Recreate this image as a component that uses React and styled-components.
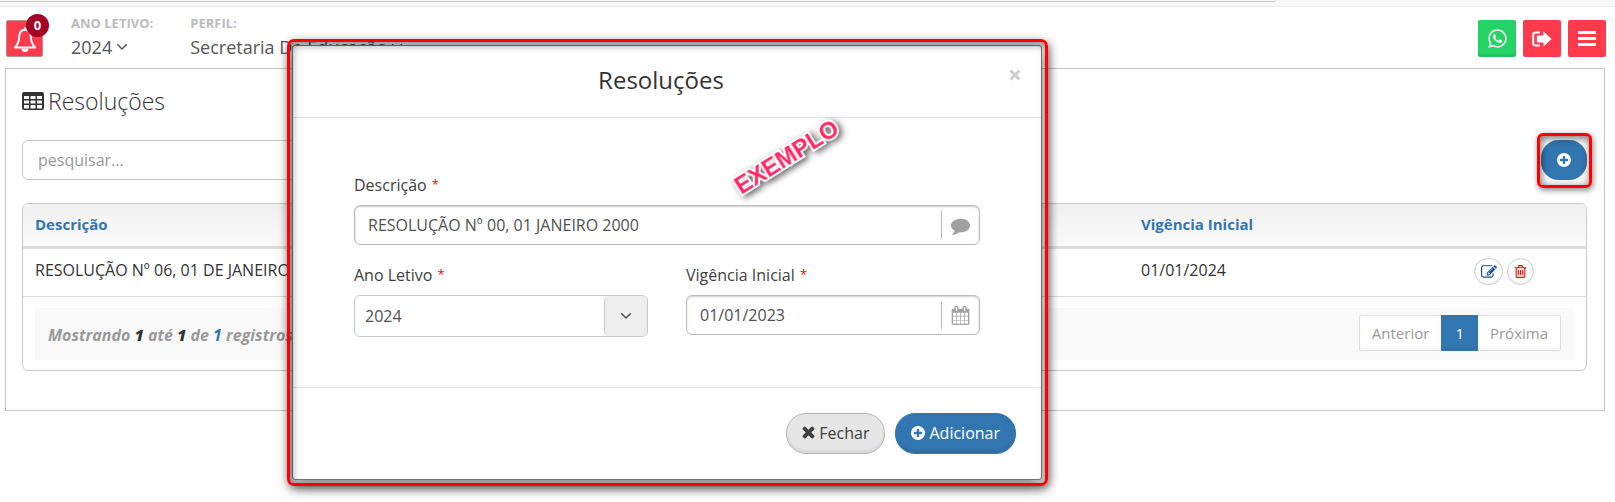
import styled, { createGlobalStyle, css } from "styled-components";
import { FaWhatsapp } from "react-icons/fa";

const GlobalStyle = createGlobalStyle`
	*, *::before, *::after {
		box-sizing: border-box;
	}
	body {
		margin: 0;
		background: #fff;
		color: #333;
		font-family: "Open Sans", "Noto Sans", sans-serif;
		font-size: 16px;
		line-height: 24px;
	}
	button, input, select {
		font: inherit;
		color: inherit;
		margin: 0;
	}
	button {
		cursor: pointer;
	}
`;

const Page = styled.div`
	position: relative;
	display: flex;
	flex-direction: column;
	min-height: 100vh;
`;

const BrowserStrip = styled.div`
	height: 7px;
	background: #f7f7f7;
	border-bottom: 1px solid #ececec;

	&::before {
		content: "";
		display: block;
		width: 79%;
		height: 2px;
		border-bottom: 1px solid #c8c8c8;
		border-bottom-right-radius: 8px;
	}
`;

const Header = styled.header`
	display: flex;
	justify-content: space-between;
	align-items: flex-start;
	height: 61px;
	padding: 13px 9px 0 6px;
`;

const HeaderLeft = styled.div`
	display: flex;
`;

const Bell = styled.button`
	position: relative;
	width: 37px;
	height: 37px;
	margin-right: 28px;
	padding: 0;
	border: 1px solid #b98f92;
	border-radius: 2px;
	background: #fd3b4d;
	color: #fff;
	display: flex;
	align-items: center;
	justify-content: center;

	svg {
		margin-top: 3px;
	}
`;

const Badge = styled.span`
	position: absolute;
	top: -7px;
	right: -7px;
	width: 23px;
	height: 23px;
	border-radius: 50%;
	background: #a50026;
	font-size: 13px;
	font-weight: 700;
	line-height: 23px;
	text-align: center;
`;

const Context = styled.div`
	margin-right: 37px;

	strong {
		display: block;
		height: 20px;
		margin-top: -7px;
		color: #bbb;
		font-size: 13px;
		line-height: 20px;
	}

	button {
		display: flex;
		align-items: center;
		gap: 4px;
		padding: 0;
		border: 0;
		background: none;
		color: #555;
		font-size: 18px;
		line-height: 28px;
	}
`;

const HeaderActions = styled.nav`
	display: flex;
	gap: 7px;
`;

const SquareButton = styled.button`
	display: flex;
	align-items: center;
	justify-content: center;
	width: 38px;
	height: 37px;
	padding: 0;
	border: 0;
	border-radius: 2px;
	background: ${({ $color }) => $color};
	color: #fff;
	box-shadow: ${({ $shade }) => ($shade ? "inset 0 -3px 2px rgba(0, 0, 0, 0.08)" : "none")};
`;

const Panel = styled.main`
	margin: 0 10px 0 5px;
	padding: 16px 17px 39px 16px;
	border: 1px solid #c8c8c8;
`;

const Title = styled.h1`
	display: flex;
	align-items: center;
	gap: 4px;
	margin: 0 0 23px;
	font-size: 23px;
	font-weight: 300;
	line-height: 32px;
`;

const Toolbar = styled.div`
	display: flex;
	justify-content: space-between;
	margin-bottom: 23px;
`;

const Search = styled.input`
	width: 40%;
	height: 40px;
	padding: 0 15px;
	border: 1px solid #c8c8c8;
	border-radius: 6px;

	&::placeholder {
		color: #999;
		opacity: 1;
	}
`;

const redFrame = css`
	content: "";
	position: absolute;
	border: 3px solid #f00;
	pointer-events: none;
`;

const AddButton = styled.button`
	position: relative;
	width: 46px;
	height: 40px;
	padding: 0;
	border: 0;
	border-radius: 18px;
	background: #3276b1;
	color: #fff;
	display: flex;
	align-items: center;
	justify-content: center;

	&::after {
		${redFrame}
		inset: -7px -5px -8px -4px;
		border-radius: 6px;
		box-shadow: 1px 2px 6px rgba(0, 0, 0, 0.5), inset 1px 2px 8px rgba(0, 0, 0, 0.6);
	}
`;

const TableBox = styled.section`
	overflow: hidden;
	border: 1px solid #c8c8c8;
	border-radius: 6px;
`;

const Table = styled.table`
	width: 100%;
	table-layout: fixed;
	border-collapse: separate;
	border-spacing: 0;

	th {
		height: 45px;
		padding: 0 12px 2px;
		border-bottom: 3px solid #ddd;
		background: linear-gradient(#f1f1f1, #fafafa);
		color: #3276b1;
		font-size: 15px;
		text-align: left;
	}
	th:nth-child(2) {
		width: 293px;
	}
	th:last-child {
		width: 164px;
	}
	td {
		height: 48px;
		padding: 9px 12px 0;
		border-bottom: 1px solid #d9d9d9;
		vertical-align: top;
	}
`;

const RowActions = styled.div`
	display: flex;
	justify-content: center;
	gap: 4px;
`;

const RoundButton = styled.button`
	display: flex;
	align-items: center;
	justify-content: center;
	width: ${({ $width }) => $width}px;
	height: 27px;
	padding: 0;
	border: 1px solid #ccc;
	border-radius: 14px;
	background: #fff;
	color: ${({ $color }) => $color};
	box-shadow: inset 0 -2px 2px rgba(0, 0, 0, 0.06);
`;

const TableFooter = styled.footer`
	display: flex;
	align-items: flex-start;
	justify-content: space-between;
	height: 52px;
	margin: 11px 12px 10px;
	padding: 7px 13px 0;
	background: #f9f9f9;
`;

const Summary = styled.p`
	margin: 8px 0 0;
	color: #999;
	font-style: italic;
	font-weight: 700;

	b {
		color: #333;
	}
	i {
		color: #3276b1;
	}
`;

const Pagination = styled.nav`
	display: flex;
	height: 36px;
`;

const PageLink = styled.a`
	padding: 0 12px;
	border: 1px solid #ddd;
	background: #fff;
	color: #999;
	font-size: 15px;
	line-height: 35px;
	text-decoration: none;
	box-shadow: inset 0 -2px 2px rgba(0, 0, 0, 0.05);

	&:first-child {
		border-right: 0;
		border-radius: 2px 0 0 2px;
	}
	&:last-child {
		border-left: 0;
		border-radius: 0 2px 2px 0;
	}
	${({ $active }) =>
		$active &&
		css`
			padding: 0 13px;
			border-color: #3276b1;
			background: #3276b1;
			color: #fff;
		`}
`;

const Overlay = styled.div`
	position: absolute;
	top: 45px;
	left: 292px;
	width: 100%;
	max-width: 750px;

	&::after {
		${redFrame}
		inset: -6px -6px -6px -5px;
		border-radius: 7px;
		box-shadow: 2px 3px 9px rgba(0, 0, 0, 0.5), inset 2px 3px 8px rgba(0, 0, 0, 0.45);
	}
`;

const Modal = styled.section`
	border: 1px solid #777;
	border-radius: 3px;
	background: #fff;
	box-shadow: 0 5px 15px rgba(0, 0, 0, 0.5);
`;

const ModalHeader = styled.header`
	display: flex;
	align-items: flex-start;
	height: 72px;
	padding: 17px 20px 0;
	border-bottom: 1px solid #e2e2e2;

	h2 {
		flex: 1;
		margin: 0;
		font-size: 24px;
		font-weight: 400;
		line-height: 34px;
		text-align: center;
	}
	button {
		display: flex;
		margin-top: 6px;
		padding: 0;
		border: 0;
		background: none;
		color: #ccc;
	}
`;

const ModalBody = styled.form`
	display: grid;
	grid-template-columns: 1fr 1fr;
	gap: 18px 38px;
	padding: 55px 61px 50px;
	border-bottom: 1px solid #e2e2e2;
`;

const Field = styled.div`
	grid-column: ${({ $wide }) => ($wide ? "1 / -1" : "auto")};

	label {
		display: block;
		margin-bottom: 8px;
		color: #404040;
	}
	sup {
		margin-left: 1px;
		color: #f00;
		font-size: 13px;
		line-height: 0;
		vertical-align: 2px;
	}
`;

const InputBox = styled.div`
	display: flex;
	align-items: center;
	height: 40px;
	border: 1px solid #bbb;
	border-radius: 6px;
	color: #a0a0a0;
	box-shadow: inset 0 1px 2px rgba(0, 0, 0, 0.2);

	input {
		flex: 1;
		min-width: 0;
		height: 28px;
		padding: 0 13px;
		border: 0;
		border-right: 1px solid #bbb;
		outline: 0;
		background: none;
		color: #505050;
	}
	svg {
		flex: none;
		margin: 0 9px;
	}
`;

const SelectBox = styled.div`
	display: grid;
	grid-template-columns: 1fr 43px;
	height: 42px;
	border: 1px solid #c8c8c8;
	border-radius: 6px;
	overflow: hidden;
	color: #505050;

	select {
		grid-area: 1 / 1 / 2 / 3;
		padding: 0 10px;
		border: 0;
		background: none;
		appearance: none;
	}
	span {
		grid-area: 1 / 2;
		display: flex;
		align-items: center;
		justify-content: center;
		border-left: 1px solid #c8c8c8;
		border-radius: 6px;
		background: #eee;
		pointer-events: none;
	}
`;

const ModalFooter = styled.footer`
	display: flex;
	justify-content: flex-end;
	gap: 10px;
	padding: 25px;
`;

const PillButton = styled.button`
	display: flex;
	align-items: center;
	gap: 4px;
	height: 41px;
	padding: 0 15px 2px;
	border: 1px solid ${({ $primary }) => ($primary ? "#3276b1" : "#b5b5b5")};
	border-radius: 20px;
	background: ${({ $primary }) => ($primary ? "#3276b1" : "#e6e6e6")};
	color: ${({ $primary }) => ($primary ? "#fff" : "#404040")};
	box-shadow: inset 0 -3px 2px rgba(0, 0, 0, 0.06);
`;

const Stamp = styled.span`
	position: absolute;
	top: 98px;
	left: 436px;
	z-index: 1;
	color: #ff2765;
	font-family: "Liberation Sans", Arial, sans-serif;
	font-size: 24px;
	font-weight: 700;
	line-height: 28px;
	transform: rotate(-32deg);
	paint-order: stroke fill;
	-webkit-text-stroke: 4px #fff;
	filter: drop-shadow(2px 3px 3px rgba(0, 0, 0, 0.6));
`;

const Glyph = ({ d, size = 16, viewBox = "0 0 1792 1792" }) => (
	<svg width={size} height={size} viewBox={viewBox} fill="currentColor" aria-hidden="true">
		<path d={d} />
	</svg>
);

const glyphs = {
	plus: "M1344 960v-128q0-26-19-45t-45-19h-256v-256q0-26-19-45t-45-19h-128q-26 0-45 19t-19 45v256h-256q-26 0-45 19t-19 45v128q0 26 19 45t45 19h256v256q0 26 19 45t45 19h128q26 0 45-19t19-45v-256h256q26 0 45-19t19-45zm320-64q0 209-103 385.5t-279.5 279.5-385.5 103-385.5-103-279.5-279.5-103-385.5 103-385.5 279.5-279.5 385.5-103 385.5 103 279.5 279.5 103 385.5z",
	times: "M1490 1322q0 40-28 68l-136 136q-28 28-68 28t-68-28l-294-294-294 294q-28 28-68 28t-68-28l-136-136q-28-28-28-68t28-68l294-294-294-294q-28-28-28-68t28-68l136-136q28-28 68-28t68 28l294 294 294-294q28-28 68-28t68 28l136 136q28 28 28 68t-28 68l-294 294 294 294q28 28 28 68z",
	comment:
		"M1792 896q0 174-120 321.5t-326 233-450 85.5q-70 0-145-8-198 175-460 242-49 14-114 22-17 2-30.5-9t-17.5-29v-1q-3-4-.5-12t2-10 4.5-9.5l6-9 7-8.5 8-9q7-8 31-34.5t34.5-38 31-39.5 32.5-51 27-59 26-76q-157-89-247.5-220t-90.5-281q0-130 71-248.5t191-204.5 286-136.5 348-50.5q244 0 450 85.5t326 233 120 321.5z",
	calendar:
		"M192 1664h288v-288h-288v288zm352 0h320v-288h-320v288zm-352-352h288v-320h-288v320zm352 0h320v-320h-320v320zm-352-384h288v-288h-288v288zm736 736h320v-288h-320v288zm-384-736h320v-288h-320v288zm768 736h288v-288h-288v288zm-384-352h320v-320h-320v320zm-352-864v-288q0-13-9.5-22.5t-22.5-9.5h-64q-13 0-22.5 9.5t-9.5 22.5v288q0 13 9.5 22.5t22.5 9.5h64q13 0 22.5-9.5t9.5-22.5zm736 864h288v-320h-288v320zm-384-384h320v-288h-320v288zm384 0h288v-288h-288v288zm32-480v-288q0-13-9.5-22.5t-22.5-9.5h-64q-13 0-22.5 9.5t-9.5 22.5v288q0 13 9.5 22.5t22.5 9.5h64q13 0 22.5-9.5t9.5-22.5zm384-64v1280q0 52-38 90t-90 38h-1408q-52 0-90-38t-38-90v-1280q0-52 38-90t90-38h128v-96q0-66 47-113t113-47h64q66 0 113 47t47 113v96h384v-96q0-66 47-113t113-47h64q66 0 113 47t47 113v96h128q52 0 90 38t38 90z",
	edit: "M888 1184l116-116-152-152-116 116v56h96v96h56zm440-720q-16-16-33 1l-350 350q-17 17-1 33t33-1l350-350q17-17 1-33zm80 594v190q0 119-84.5 203.5t-203.5 84.5h-832q-119 0-203.5-84.5t-84.5-203.5v-832q0-119 84.5-203.5t203.5-84.5h832q63 0 117 25 15 7 18 23 3 17-9 29l-49 49q-14 14-32 8-23-6-45-6h-832q-66 0-113 47t-47 113v832q0 66 47 113t113 47h832q66 0 113-47t47-113v-126q0-13 9-22l64-64q15-15 35-7t20 29zm-96-738l288 288-672 672h-288v-288zm444 132l-92 92-288-288 92-92q28-28 68-28t68 28l152 152q28 28 28 68t-28 68z",
	trash: "M704 736v576q0 14-9 23t-23 9h-64q-14 0-23-9t-9-23v-576q0-14 9-23t23-9h64q14 0 23 9t9 23zm256 0v576q0 14-9 23t-23 9h-64q-14 0-23-9t-9-23v-576q0-14 9-23t23-9h64q14 0 23 9t9 23zm256 0v576q0 14-9 23t-23 9h-64q-14 0-23-9t-9-23v-576q0-14 9-23t23-9h64q14 0 23 9t9 23zm128 724v-948h-896v948q0 22 7 40.5t14.5 27 10.5 8.5h832q3 0 10.5-8.5t14.5-27 7-40.5zm-672-1076h448l-48-117q-7-9-17-11h-317q-10 2-17 11zm928 32v64q0 14-9 23t-23 9h-96v948q0 83-47 143.5t-113 60.5h-832q-66 0-113-58.5t-47-141.5v-952h-96q-14 0-23-9t-9-23v-64q0-14 9-23t23-9h309l70-167q15-37 54-63t79-26h320q40 0 79 26t54 63l70 167h309q14 0 23 9t9 23z",
};

const BellIcon = () => (
	<svg width="24" height="26" viewBox="0 0 24 26" fill="none" stroke="currentColor" strokeWidth="2" strokeLinejoin="round" aria-hidden="true">
		<path d="M12 2.6C7.8 3.2 6.3 6 6.2 9.5C6.1 14.5 5 17.5 1.8 20.4H22.2C19 17.5 17.9 14.5 17.8 9.5C17.7 6 16.2 3.2 12 2.6Z" />
		<path d="M12 1V3" strokeLinecap="round" />
		<path d="M8.6 21.5a3.4 3.6 0 0 0 6.8 0z" fill="currentColor" stroke="none" />
	</svg>
);

const TableIcon = () => (
	<svg width="22" height="19" viewBox="0 0 22 19" aria-hidden="true">
		<path
			fill="currentColor"
			fillRule="evenodd"
			d="M2 0H20Q22 0 22 2V16Q22 18 20 18H2Q0 18 0 16V2Q0 0 2 0ZM2 4V7H7V4ZM8.5 4V7H13.5V4ZM15 4V7H20V4ZM2 8.5V11.5H7V8.5ZM8.5 8.5V11.5H13.5V8.5ZM15 8.5V11.5H20V8.5ZM2 13V16.5H7V13ZM8.5 13V16.5H13.5V13ZM15 13V16.5H20V13Z"
		/>
	</svg>
);

const ChevronIcon = () => (
	<svg width="12" height="8" viewBox="0 0 12 8" fill="none" stroke="currentColor" strokeWidth="1.5" aria-hidden="true">
		<path d="M1.2 1.3L6 6L10.8 1.3" />
	</svg>
);

const LogoutIcon = () => (
	<svg width="20" height="16" viewBox="0 0 20 16" aria-hidden="true">
		<path d="M8 1.5H3.5Q1.2 1.5 1.2 3.8V12.2Q1.2 14.5 3.5 14.5H8" fill="none" stroke="currentColor" strokeWidth="2" />
		<path d="M11.5 0.5L19.5 8L11.5 15.5V11.5H6Q4.8 11.5 4.8 10.3V5.7Q4.8 4.5 6 4.5H11.5Z" fill="currentColor" />
	</svg>
);

const MenuIcon = () => (
	<svg width="18" height="15" viewBox="0 0 18 15" fill="currentColor" aria-hidden="true">
		<path d="M0 0H18V3H0ZM0 6H18V9H0ZM0 12H18V15H0Z" />
	</svg>
);

const ResolutionModal = () => (
	<Overlay>
		<Modal role="dialog" aria-labelledby="modal-title">
			<ModalHeader>
				<h2 id="modal-title">Resoluções</h2>
				<button type="button" aria-label="Fechar janela">
					<svg width="12" height="12" viewBox="0 0 12 12" stroke="currentColor" strokeWidth="2.8" aria-hidden="true">
						<path d="M1.5 1.5L10.5 10.5M10.5 1.5L1.5 10.5" />
					</svg>
				</button>
			</ModalHeader>
			<ModalBody id="resolution-form">
				<Field $wide>
					<label htmlFor="description">
						Descrição <sup>*</sup>
					</label>
					<InputBox>
						<input id="description" type="text" defaultValue="RESOLUÇÃO Nº 00, 01 JANEIRO 2000" />
						<Glyph d={glyphs.comment} size={19} />
					</InputBox>
				</Field>
				<Field>
					<label htmlFor="year">
						Ano Letivo <sup>*</sup>
					</label>
					<SelectBox>
						<select id="year" defaultValue="2024">
							<option>2024</option>
						</select>
						<span>
							<ChevronIcon />
						</span>
					</SelectBox>
				</Field>
				<Field>
					<label htmlFor="start-date">
						Vigência Inicial <sup>*</sup>
					</label>
					<InputBox>
						<input id="start-date" type="text" defaultValue="01/01/2023" />
						<Glyph d={glyphs.calendar} size={19} />
					</InputBox>
				</Field>
			</ModalBody>
			<ModalFooter>
				<PillButton type="button">
					<Glyph d={glyphs.times} size={13} viewBox="256 320 1280 1280" />
					Fechar
				</PillButton>
				<PillButton type="submit" form="resolution-form" $primary>
					<Glyph d={glyphs.plus} size={14} viewBox="128 128 1536 1536" />
					Adicionar
				</PillButton>
			</ModalFooter>
		</Modal>
		<Stamp>EXEMPLO</Stamp>
	</Overlay>
);

const App = () => {
	return (
		<>
			<GlobalStyle />
			<Page>
				<BrowserStrip />
				<Header>
					<HeaderLeft>
						<Bell type="button" aria-label="Notificações">
							<BellIcon />
							<Badge>0</Badge>
						</Bell>
						<Context>
							<strong>ANO LETIVO:</strong>
							<button type="button">
								2024 <ChevronIcon />
							</button>
						</Context>
						<Context>
							<strong>PERFIL:</strong>
							<button type="button">
								Secretaria De Educação <ChevronIcon />
							</button>
						</Context>
					</HeaderLeft>
					<HeaderActions>
						<SquareButton type="button" $color="#25d366" $shade aria-label="WhatsApp">
							<FaWhatsapp size={21} />
						</SquareButton>
						<SquareButton type="button" $color="#fd3b4d" aria-label="Sair">
							<LogoutIcon />
						</SquareButton>
						<SquareButton type="button" $color="#fd3b4d" aria-label="Menu">
							<MenuIcon />
						</SquareButton>
					</HeaderActions>
				</Header>
				<Panel>
					<Title>
						<TableIcon />
						Resoluções
					</Title>
					<Toolbar>
						<Search type="text" placeholder="pesquisar..." aria-label="pesquisar" />
						<AddButton type="button" aria-label="Adicionar">
							<Glyph d={glyphs.plus} size={14} viewBox="128 128 1536 1536" />
						</AddButton>
					</Toolbar>
					<TableBox>
						<Table>
							<thead>
								<tr>
									<th>Descrição</th>
									<th>Vigência Inicial</th>
									<th aria-label="Ações" />
								</tr>
							</thead>
							<tbody>
								<tr>
									<td>RESOLUÇÃO Nº 06, 01 DE JANEIRO</td>
									<td>01/01/2024</td>
									<td>
										<RowActions>
											<RoundButton type="button" $width={29} $color="#1c4f8f" aria-label="Editar">
												<Glyph d={glyphs.edit} size={16} />
											</RoundButton>
											<RoundButton type="button" $width={27} $color="#f00" aria-label="Excluir">
												<Glyph d={glyphs.trash} size={15} />
											</RoundButton>
										</RowActions>
									</td>
								</tr>
							</tbody>
						</Table>
						<TableFooter>
							<Summary>
								Mostrando <b>1</b> até <b>1</b> de <i>1</i> registros
							</Summary>
							<Pagination>
								<PageLink href="#">Anterior</PageLink>
								<PageLink href="#" $active>
									1
								</PageLink>
								<PageLink href="#">Próxima</PageLink>
							</Pagination>
						</TableFooter>
					</TableBox>
				</Panel>
				<ResolutionModal />
			</Page>
		</>
	);
};

export default App;
